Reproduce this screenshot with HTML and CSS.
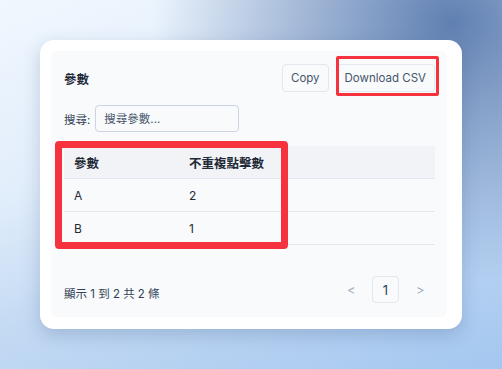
FILE: index.html
```html
<!DOCTYPE html>
<html lang="zh-Hant">
<head>
    <meta charset="UTF-8">
    <meta name="viewport" content="width=device-width, initial-scale=1.0">
    <title>參數</title>
    <link rel="stylesheet" href="styles.css">
</head>
<body>
    <div class="card">
        <div class="panel">
            <div class="header">
                <h2>參數</h2>
                <div class="actions">
                    <button class="btn">Copy</button>
                    <button class="btn">Download CSV</button>
                    <span class="mark mark-btn"></span>
                </div>
            </div>

            <div class="search">
                <label>搜尋:</label>
                <input type="text" placeholder="搜尋參數...">
            </div>

            <div class="table-wrap">
                <table>
                    <tr>
                        <th class="col1">參數</th>
                        <th>不重複點擊數</th>
                        <th></th>
                    </tr>
                    <tr>
                        <td>A</td>
                        <td>2</td>
                        <td></td>
                    </tr>
                    <tr>
                        <td>B</td>
                        <td>1</td>
                        <td></td>
                    </tr>
                </table>
                <span class="mark mark-table"></span>
            </div>

            <div class="footer">
                <span class="info">顯示 1 到 2 共 2 條</span>
                <div class="pager">
                    <span class="arrow">&lt;</span>
                    <span class="page">1</span>
                    <span class="arrow">&gt;</span>
                </div>
            </div>
        </div>
    </div>
</body>
</html>
```

FILE: styles.css
```css
html, body {
    margin: 0;
    height: 100%;
}
body {
    width: 502px;
    height: 369px;
    overflow: hidden;
    font-family: "Inter", "Noto Sans CJK TC", sans-serif;
    color: #334155;
    background:
        radial-gradient(ellipse 300px 260px at 90% 6%, rgba(96, 128, 178, 1), rgba(96, 128, 178, 0) 100%),
        linear-gradient(160deg, #f0f7fe 0%, #e2eefb 35%, #c4daf3 60%, #a4c7f0 100%);
    padding: 40px;
    box-sizing: border-box;
}

.card {
    width: 422px;
    height: 289px;
    background: #ffffff;
    border-radius: 14px;
    box-shadow: 0 6px 18px rgba(40, 70, 120, 0.22);
    padding: 11px 15px 12px 11px;
    box-sizing: border-box;
}
.panel {
    height: 100%;
    background: #f8fafc;
    border-radius: 6px;
    padding: 13px 12px 14px 13px;
    box-sizing: border-box;
    display: flex;
    flex-direction: column;
}

.header {
    display: flex;
    justify-content: space-between;
    align-items: center;
    height: 28px;
}
h2 {
    margin: 0;
    font-size: 12.5px;
    font-weight: 700;
    color: #1f2937;
}
.actions {
    position: relative;
    display: flex;
    gap: 7px;
}
.btn {
    font-family: inherit;
    font-size: 11.5px;
    color: #475569;
    background: #f8fafc;
    border: 1px solid #e2e8f0;
    border-radius: 4px;
    height: 28px;
    padding: 0 8px;
}

.search {
    display: flex;
    align-items: center;
    gap: 5px;
    margin-top: 13px;
    font-size: 11.5px;
}
.search input {
    width: 144px;
    height: 27px;
    box-sizing: border-box;
    border: 1px solid #cbd5e1;
    border-radius: 4px;
    background: #f8fafc;
    padding: 0 8px;
    font-family: inherit;
    font-size: 11.5px;
}
.search input::placeholder {
    color: #475569;
}

.table-wrap {
    position: relative;
    margin-top: 14px;
}
table {
    width: 100%;
    border-collapse: collapse;
    font-size: 12px;
}
th {
    background: #f1f3f6;
    text-align: left;
    font-weight: 700;
    font-size: 12.5px;
    color: #1f2937;
    height: 32px;
    padding: 0 10px;
}
td {
    height: 32px;
    padding: 0 10px;
    border-top: 1px solid #e2e8f0;
    color: #1f2937;
}
tr:last-child td {
    border-bottom: 1px solid #e2e8f0;
}
.col1 {
    width: 95px;
}

.footer {
    margin-top: auto;
    display: flex;
    justify-content: space-between;
    align-items: center;
}
.info {
    font-size: 11.5px;
    padding-top: 7px;
}
.pager {
    display: flex;
    align-items: center;
    gap: 17px;
    padding-right: 11px;
    color: #a0aec0;
    font-size: 13px;
}
.arrow {
    width: 8px;
    text-align: center;
}
.page {
    width: 27px;
    height: 27px;
    box-sizing: border-box;
    border: 1px solid #e2e8f0;
    border-radius: 4px;
    display: flex;
    align-items: center;
    justify-content: center;
    color: #334155;
    font-size: 13px;
}

/* annotation boxes */
.mark {
    position: absolute;
    border-style: solid;
    border-color: #f6323f;
    box-sizing: border-box;
    pointer-events: none;
}
.mark-btn {
    right: -4px;
    top: -8px;
    width: 103px;
    height: 40px;
    border-width: 3px;
    border-radius: 2px;
}
.mark-table {
    left: -9px;
    top: -5px;
    width: 233px;
    height: 108px;
    border-width: 7px;
    border-radius: 4px;
}
```
